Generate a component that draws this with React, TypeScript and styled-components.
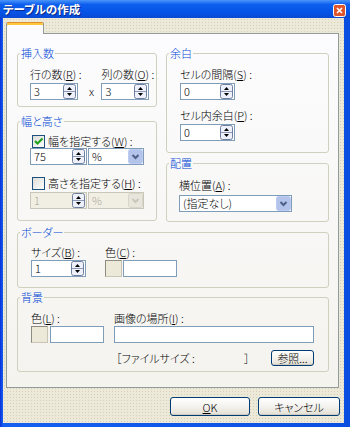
import React from "react";
import styled, { createGlobalStyle } from "styled-components";

const Global = createGlobalStyle`
  html, body { margin: 0; padding: 0; }
  body {
    width: 350px; height: 427px; overflow: hidden;
    font-family: "Noto Sans CJK JP", "Noto Sans", sans-serif;
    font-size: 11px; color: #000; font-weight: 300;
    font-feature-settings: "palt";
  }
`;

const Window = styled.div`
  width: 350px; height: 427px; box-sizing: border-box;
  display: flex; flex-direction: column;
  background: linear-gradient(90deg, #0831D9 0px, #1660F0 3px, #0A4FE0 100%);
`;

const TitleBar = styled.div`
  height: 18px; flex: none; display: flex; align-items: center; justify-content: space-between;
  padding: 0 4px 0 3px;
  background: linear-gradient(#4A95FA 0%, #0D5EEE 25%, #0553E6 70%, #0A4AD3 100%);
  color: #fff; font-weight: bold; font-size: 11.5px; line-height: 18px;
  text-shadow: 1px 1px 0 #0A2A8A;
`;

const CloseBtn = styled.div`
  width: 13px; height: 13px; margin-top: 3px; display: flex;
`;

const Body = styled.div`
  flex: 1; display: flex; flex-direction: column;
  margin: 0 6px 4px 3px;
  background-color: #ECE9D8;
  background-image: radial-gradient(rgba(170, 160, 130, 0.35) 0.7px, transparent 0.9px);
  background-size: 3px 3px;
`;

const TabStrip = styled.div`
  display: flex; padding: 4px 0 0 3px; position: relative; z-index: 1;
`;

const Tab = styled.div`
  width: 38px; height: 12px; box-sizing: border-box; margin-bottom: -1px;
  border: 1px solid #919B9C; border-bottom: none; border-top: 1px solid #E68B2C;
  border-radius: 2px 2px 0 0;
  box-shadow: inset 0 2px 0 #FFC73C;
  background: #FCFCFE;
`;

const Panel = styled.div`
  margin: 0 5px 0 3px; height: 355px; box-sizing: border-box;
  border: 1px solid #919B9C;
  background: linear-gradient(#FCFCFE, #F4F3EE);
  padding: 13px 9px 0 10px;
  display: flex; flex-direction: column;
`;

const TopGrid = styled.div`
  display: grid; grid-template-columns: 140px 163px; column-gap: 9px;
  height: 175px;
`;

const Column = styled.div<{ $gap: number }>`
  display: flex; flex-direction: column; gap: ${(p) => p.$gap}px;
`;

const Group = styled.fieldset<{ $h: number; $mt?: number }>`
  margin: ${(p) => p.$mt ?? 0}px 0 0 0; padding: 0; min-width: 0;
  height: ${(p) => p.$h}px; box-sizing: border-box;
  border: 1px solid #D0D0BF; border-radius: 3px;
`;

const Legend = styled.legend`
  padding: 0 1px; margin-left: 2px;
  color: #0046D5; font-size: 11px; line-height: 12px; height: 12px;
`;

const Content = styled.div<{ $pt: number; $pl: number }>`
  padding: ${(p) => p.$pt}px 0 0 ${(p) => p.$pl}px;
  display: flex; flex-direction: column;
`;

const Row = styled.div<{ $gap?: number; $mt?: number; $align?: string }>`
  display: flex; align-items: ${(p) => p.$align ?? "flex-end"};
  gap: ${(p) => p.$gap ?? 0}px; margin-top: ${(p) => p.$mt ?? 0}px;
`;

const Field = styled.div<{ $gap?: number; $mt?: number }>`
  display: flex; flex-direction: column; gap: ${(p) => p.$gap ?? 2}px;
  margin-top: ${(p) => p.$mt ?? 0}px;
`;

const Label = styled.div`
  line-height: 14px; height: 14px; white-space: nowrap;
`;

const Times = styled.div`
  width: 20px; text-align: center; line-height: 17px; height: 17px;
`;

const Box = styled.div<{ $w: number; $disabled?: boolean }>`
  width: ${(p) => p.$w}px; height: 17px; box-sizing: border-box;
  border: 1px solid ${(p) => (p.$disabled ? "#C9C7BA" : "#7F9DB9")};
  background: ${(p) => (p.$disabled ? "#F1EFE4" : "#fff")};
  color: ${(p) => (p.$disabled ? "#ACA899" : "#000")};
  display: flex; align-items: center; padding-left: 3px;
  line-height: 15px; flex: none;
`;

const Value = styled.span`
  flex: 1; white-space: nowrap; overflow: hidden;
`;

const SpinWrap = styled.div`
  width: 13px; height: 15px; margin-right: 1px; display: flex;
`;

const DropWrap = styled.div`
  width: 15px; height: 15px; display: flex;
`;

const CheckRow = styled.label<{ $mt?: number }>`
  display: flex; align-items: center; gap: 3px; height: 14px;
  padding-left: 2px; margin-top: ${(p) => p.$mt ?? 0}px; white-space: nowrap;
`;

const CheckBox = styled.div`
  width: 13px; height: 13px; box-sizing: border-box;
  border: 1px solid #1C5180;
  background: linear-gradient(135deg, #DCDCD7, #FFFFFF);
  display: flex; align-items: center; justify-content: center;
`;

const Swatch = styled.div`
  width: 17px; height: 17px; box-sizing: border-box; flex: none;
  border: 1px solid #8E8C80; border-right-color: #C8C5B6; border-bottom-color: #C8C5B6;
  background: #ECE9D8;
`;

const TextBox = styled.div<{ $w: number }>`
  width: ${(p) => p.$w}px; height: 17px; box-sizing: border-box; flex: none;
  border: 1px solid #7F9DB9; background: #fff;
`;

const XPButton = styled.button<{ $w: number; $h: number }>`
  width: ${(p) => p.$w}px; height: ${(p) => p.$h}px; box-sizing: border-box;
  border: 1px solid #003C74; border-radius: 3px; padding: 0;
  background: linear-gradient(#FFFFFF 0%, #F3F2EE 50%, #E6E3D9 90%, #D6D0C5 100%);
  box-shadow: inset 0 -1px 0 #D1CCC1, inset 1px 0 0 #F5F4F0;
  font-family: inherit; font-size: 11px; font-weight: 300; color: #000; line-height: 14px;
  font-feature-settings: "palt";
`;

const FileRow = styled.div`
  display: flex; align-items: center; margin-top: 6px; padding-left: 2px;
`;

const FileSize = styled.span`
  width: 128px; white-space: nowrap;
`;

const Bracket = styled.span`
  width: 27px;
`;

const ButtonRow = styled.div`
  display: flex; justify-content: flex-end; gap: 8px;
  margin-top: 9px; padding-right: 4px;
`;

const Spin = () => (
  <SpinWrap>
    <svg width="13" height="15" viewBox="0 0 13 15">
      <rect x="0.5" y="0.5" width="12" height="14" rx="2" fill="#EEF1FA" stroke="#6E7E9E" />
      <line x1="1" y1="7.5" x2="12" y2="7.5" stroke="#8C9AB8" />
      <path d="M4 6 L6.5 3 L9 6 Z" fill="#000" />
      <path d="M4 9 L6.5 12 L9 9 Z" fill="#000" />
    </svg>
  </SpinWrap>
);

const Drop = ({ disabled }: { disabled?: boolean }) => (
  <DropWrap>
    <svg width="15" height="15" viewBox="0 0 15 15">
      <rect x="0.5" y="0.5" width="14" height="14" rx="2" fill={disabled ? "#E8E6DC" : "#B3C3EA"} stroke={disabled ? "#D8D5C8" : "#BBCBF2"} />
      <path d="M4.5 6 L7.5 9 L10.5 6" fill="none" stroke={disabled ? "#C9C7BA" : "#4D6185"} strokeWidth="2" />
    </svg>
  </DropWrap>
);

const SpinBox = ({ w, value, disabled }: { w: number; value: string; disabled?: boolean }) => (
  <Box $w={w} $disabled={disabled}>
    <Value>{value}</Value>
    <Spin />
  </Box>
);

const Select = ({ w, value, disabled }: { w: number; value: string; disabled?: boolean }) => (
  <Box $w={w} $disabled={disabled}>
    <Value>{value}</Value>
    <Drop disabled={disabled} />
  </Box>
);

const Check = ({ checked }: { checked?: boolean }) => (
  <CheckBox>
    {checked && (
      <svg width="11" height="11" viewBox="0 0 11 11">
        <path d="M2 5 L4.5 7.5 L9.5 2.5" fill="none" stroke="#21A121" strokeWidth="2.2" />
      </svg>
    )}
  </CheckBox>
);

export default function App() {
  return (
    <>
      <Global />
      <Window>
        <TitleBar>
          <span>テーブルの作成</span>
          <CloseBtn>
            <svg width="13" height="13" viewBox="0 0 13 13">
              <rect x="0.5" y="0.5" width="12" height="12" rx="2" fill="#E0552B" stroke="#FFFFFF" />
              <path d="M4 4 L9 9 M9 4 L4 9" stroke="#fff" strokeWidth="1.6" />
            </svg>
          </CloseBtn>
        </TitleBar>
        <Body>
          <TabStrip>
            <Tab />
          </TabStrip>
          <Panel>
            <TopGrid>
              <Column $gap={8}>
                <Group $h={60}>
                  <Legend>挿入数</Legend>
                  <Content $pt={8} $pl={12}>
                    <Row>
                      <Field>
                        <Label>行の数(<u>R</u>) :</Label>
                        <SpinBox w={48} value="3" />
                      </Field>
                      <Times>x</Times>
                      <Field>
                        <Label>列の数(<u>O</u>) :</Label>
                        <SpinBox w={48} value="3" />
                      </Field>
                    </Row>
                  </Content>
                </Group>
                <Group $h={106}>
                  <Legend>幅と高さ</Legend>
                  <Content $pt={7} $pl={12}>
                    <CheckRow>
                      <Check checked />
                      <span>幅を指定する(<u>W</u>) :</span>
                    </CheckRow>
                    <Row $gap={1}>
                      <SpinBox w={57} value="75" />
                      <Select w={56} value="%" />
                    </Row>
                    <CheckRow $mt={11}>
                      <Check />
                      <span>高さを指定する(<u>H</u>) :</span>
                    </CheckRow>
                    <Row $gap={1} $mt={2}>
                      <SpinBox w={57} value="1" disabled />
                      <Select w={56} value="%" disabled />
                    </Row>
                  </Content>
                </Group>
              </Column>
              <Column $gap={4}>
                <Group $h={106}>
                  <Legend>余白</Legend>
                  <Content $pt={8} $pl={13}>
                    <Field>
                      <Label>セルの間隔(<u>S</u>) :</Label>
                      <SpinBox w={55} value="0" />
                    </Field>
                    <Field $mt={8}>
                      <Label>セル内余白(<u>P</u>) :</Label>
                      <SpinBox w={55} value="0" />
                    </Field>
                  </Content>
                </Group>
                <Group $h={65}>
                  <Legend>配置</Legend>
                  <Content $pt={9} $pl={12}>
                    <Field $gap={3}>
                      <Label>横位置(<u>A</u>) :</Label>
                      <Select w={113} value="(指定なし)" />
                    </Field>
                  </Content>
                </Group>
              </Column>
            </TopGrid>
            <Group $h={62} $mt={4}>
              <Legend>ボーダー</Legend>
              <Content $pt={7} $pl={13}>
                <Row $gap={19} $align="flex-start">
                  <Field $gap={1}>
                    <Label>サイズ(<u>B</u>) :</Label>
                    <SpinBox w={55} value="1" />
                  </Field>
                  <Field $gap={1}>
                    <Label>色(<u>C</u>) :</Label>
                    <Row $gap={1}>
                      <Swatch />
                      <TextBox $w={54} />
                    </Row>
                  </Field>
                </Row>
              </Content>
            </Group>
            <Group $h={81} $mt={3}>
              <Legend>背景</Legend>
              <Content $pt={8} $pl={13}>
                <Row $gap={10} $align="flex-start">
                  <Field $gap={1}>
                    <Label>色(<u>L</u>) :</Label>
                    <Row $gap={2}>
                      <Swatch />
                      <TextBox $w={54} />
                    </Row>
                  </Field>
                  <Field $gap={1}>
                    <Label>画像の場所(<u>I</u>) :</Label>
                    <TextBox $w={200} />
                    <FileRow>
                      <FileSize>［ファイルサイズ :</FileSize>
                      <Bracket>］</Bracket>
                      <XPButton $w={43} $h={16}>参照...</XPButton>
                    </FileRow>
                  </Field>
                </Row>
              </Content>
            </Group>
          </Panel>
          <ButtonRow>
            <XPButton $w={80} $h={19}><u>O</u>K</XPButton>
            <XPButton $w={82} $h={19}>キャンセル</XPButton>
          </ButtonRow>
        </Body>
      </Window>
    </>
  );
}
